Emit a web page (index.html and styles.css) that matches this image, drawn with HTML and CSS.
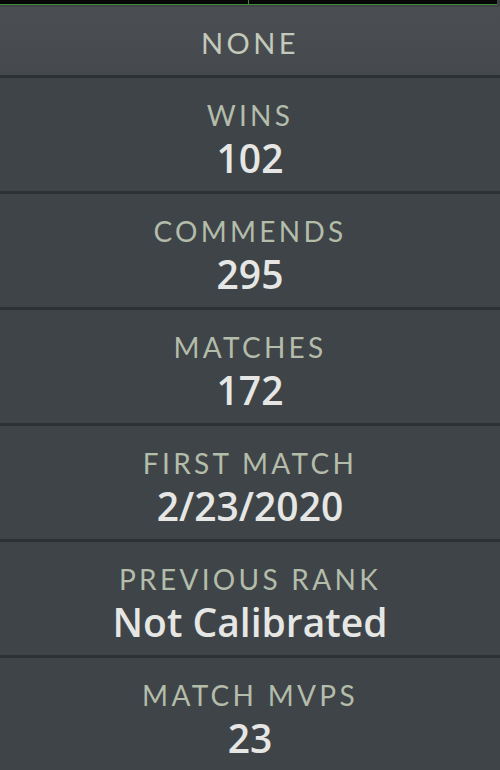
FILE: index.html
```html
<!DOCTYPE html>
<html lang="en">
<head>
    <meta charset="UTF-8">
    <meta name="viewport" content="width=device-width, initial-scale=1.0">
    <title>Profile Stats</title>
    <link rel="stylesheet" href="styles.css">
</head>
<body>
    <div class="tabs">
        <div class="tab"></div>
        <div class="tab"></div>
    </div>
    <div class="filter">NONE</div>
    <div class="stats">
        <div class="stat">
            <div class="label">WINS</div>
            <div class="value">102</div>
        </div>
        <div class="stat">
            <div class="label">COMMENDS</div>
            <div class="value">295</div>
        </div>
        <div class="stat">
            <div class="label">MATCHES</div>
            <div class="value">172</div>
        </div>
        <div class="stat">
            <div class="label">FIRST MATCH</div>
            <div class="value">2/23/2020</div>
        </div>
        <div class="stat">
            <div class="label">PREVIOUS RANK</div>
            <div class="value">Not Calibrated</div>
        </div>
        <div class="stat">
            <div class="label">MATCH MVPS</div>
            <div class="value">23</div>
        </div>
    </div>
</body>
</html>
```

FILE: styles.css
```css
body {
    margin: 0;
    background-color: #3e4448;
    font-family: Lato, "Noto Sans", sans-serif;
    text-align: center;
    height: 770px;
    overflow: hidden;
}
.tabs {
    display: grid;
    grid-template-columns: 248px 248px;
    gap: 1px;
    background-color: #3f8b3c;
    padding-bottom: 1px;
    width: 497px;
}
.tab {
    height: 4px;
    background-color: #050606;
}
.filter {
    height: 68px;
    margin-top: 2px;
    background: linear-gradient(#4b4f53, #45494d);
    color: #c3c9bb;
    font-size: 29px;
    letter-spacing: 3.5px;
    line-height: 72px;
}
.stats {
    border-top: 3px solid #2c3134;
}
.stat {
    height: 116px;
    box-sizing: border-box;
    border-bottom: 3px solid #2c3134;
    display: flex;
    flex-direction: column;
    align-items: center;
    padding-top: 22px;
}
.stat:last-child {
    border-bottom: none;
}
.label {
    color: #b4bcaa;
    font-size: 28px;
    letter-spacing: 3.3px;
    line-height: 30px;
}
.value {
    color: #e6e7e4;
    font-family: "Open Sans", Lato, sans-serif;
    font-size: 39px;
    line-height: 46px;
    font-weight: 600;
    margin-top: 5px;
}
```
